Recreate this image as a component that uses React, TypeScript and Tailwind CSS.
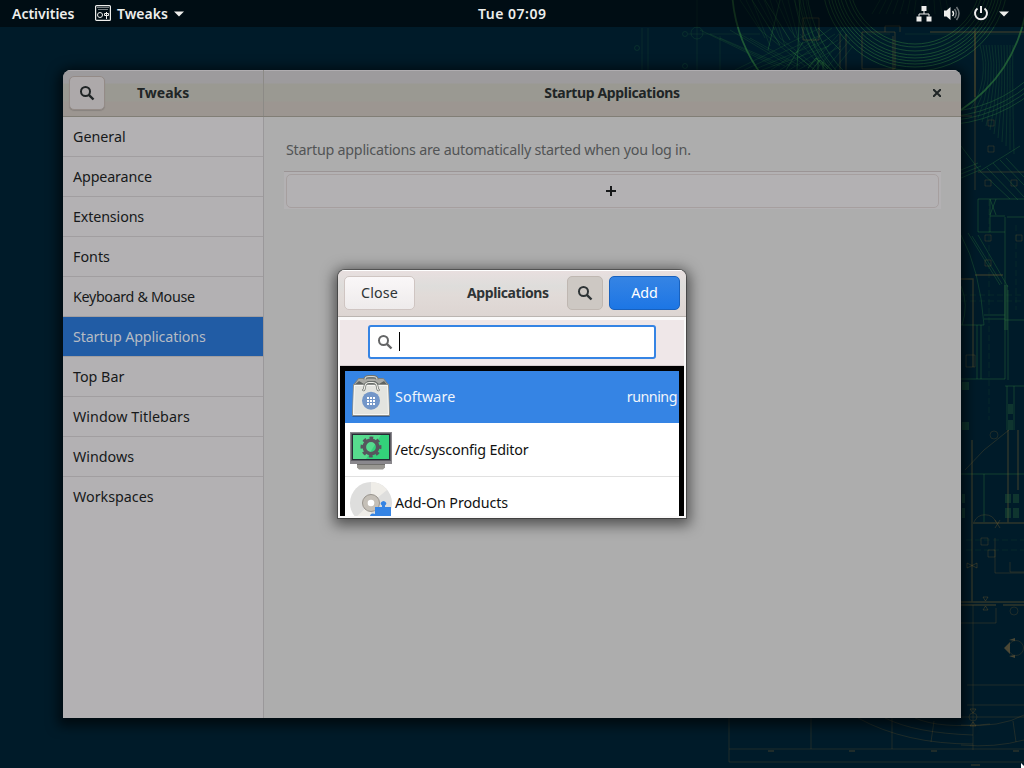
import React from "react";

const items = [
  { label: "General", tracking: "" },
  { label: "Appearance", tracking: "tracking-[-0.14px]" },
  { label: "Extensions", tracking: "tracking-[-0.14px]" },
  { label: "Fonts", tracking: "" },
  { label: "Keyboard & Mouse", tracking: "tracking-[-0.34px]" },
  { label: "Startup Applications", tracking: "tracking-[-0.15px]" },
  { label: "Top Bar", tracking: "" },
  { label: "Window Titlebars", tracking: "tracking-[0.05px]" },
  { label: "Windows", tracking: "" },
  { label: "Workspaces", tracking: "" },
];

function Search({ className }: { className: string }) {
  return (
    <svg className={className} width="16" height="16" viewBox="0 0 16 16" fill="none" stroke="currentColor">
      <circle cx="6.500" cy="6.500" r="4.500" strokeWidth="2" />
      <path d="M9.800 9.800l4.700 4.700" strokeWidth="2.400" />
    </svg>
  );
}

function Caret() {
  return <svg width="10" height="6" viewBox="0 0 10 6" fill="currentColor"><path d="M0 .5h10L5 5.500z" /></svg>;
}

const radii = [66, 69, 73, 77, 80, 83, 86, 89, 93];
const outerRadii = [134, 139, 143, 147];
const rays = [0, 1, 2, 3, 4, 5, 6, 7, 8, 9, 10, 11];

function Wallpaper() {
  return (
    <svg className="absolute inset-0" width="1024" height="768" viewBox="0 0 1024 768" fill="none">
      <g stroke="#2e7a3c" strokeOpacity=".42" strokeWidth=".8">
        {radii.map((r) => <circle key={r} cx="915" cy="-22" r={r} strokeOpacity=".62" />)}
        {outerRadii.map((r) => <circle key={r} cx="940" cy="-22" r={r} strokeOpacity=".5" />)}
        <circle cx="880" cy="-14" r="148" strokeWidth="1.800" strokeOpacity=".65" />
        <g strokeOpacity=".28">
          {rays.map((i) => <path key={i} d={`M${700 + i * 10} ${30 + (i % 3) * 4}L${775 + i * 5} 66M${735 + i * 9} 70L${820 + i * 3} ${28 + (i % 4) * 6}`} />)}
          {rays.map((i) => <path key={i} d={`M${980 + i * 3} 45Q${990 + i * 2} 80 ${970 + i * 4} ${110 + i * 4}`} />)}
          {rays.map((i) => <path key={i} d={`M${740 + i * 6} 0L${760 + i * 5} ${30 + (i % 3) * 8}M${880 + i * 6} 0L${872 + i * 7} 14`} />)}
        </g>
        <path d="M752 0L780 45M765 0L790 40M780 0L768 50M800 0L797 70M790 50L815 70M803 42L786 70M840 50L818 28" strokeOpacity=".5" />
        <path d="M688 34H760M697 0V70M642 28V70M648 28V70M720 36V70M866 34H890M905 34H1024" strokeOpacity=".22" />
        <g strokeOpacity=".25"><circle cx="685" cy="34" r="2.500" /><circle cx="697" cy="33" r="6" /><circle cx="685" cy="66" r="2.500" /><circle cx="637" cy="48" r="2.500" /></g>
        <path d="M808 68L816 58L828 69M812 70L820 60L832 70M818 60V70M823 62V70" strokeOpacity=".7" />
        <path d="M961 146L980 171L1020 146M980 171L1010 199M987 168L1018 200M993 163L1024 197M1000 160L1024 185M961 235Q980 270 984 325M961 286Q969 305 962 325M968 233L1000 285M978 235L1008 287M972 236L1002 284M1006 158L1024 177M961 170L978 163M961 174L981 166M961 178L980 170" />
        <path d="M961 325H984M961 379H1005V217M1008 290V380M978 199H1024M978 199V232H1005M990 199V232M990 199l6 16M996 199l-6 16M990 216H1005M1005 320H1024M961 474H1024M984 474V522M1007 386V430M1014 386V430M1005 386H1024M984 315H1005M984 319H1005M977 325V379M981 325V379M1007 217H1024" strokeOpacity=".5" />
        <path d="M989 200V420M1016 225V310M961 295H1024M961 301H1024M966 540H1024M966 550H1024" strokeOpacity=".2" strokeDasharray="6 3" />
      </g>
      <g stroke="#8b6b2e" strokeOpacity=".34">
        <path d="M803 18H819V40H803zM862 32H895V69H862zM893 36V70M885 32V26H900V32M840 34V70M846 34V70M975 28V190M961 116H972M978 172H1024" />
        <path d="M930 32H1024M975 32V97M975 275H1003M961 279H973V367M972 440V602M973 523H1024M1008 430V523M1018 430V490M961 602H1024M961 605H996M1003 605H1024" strokeWidth="1.400" />
        <path d="M967 685H1024M967 705H1024M973 605V750M961 717H1024M961 745Q995 748 1024 740M961 725Q1000 728 1024 715M729 718V762H1024M729 749H1024M811 718V749M892 718V749M858 718Q905 744 973 744M885 718Q915 733 973 735M915 718Q940 729 990 724M934 721L931 742M1013 721L1016 742" strokeOpacity=".22" />
        <path d="M988 120h6v6h-6zM988 146h6v6h-6zM985 180h6v6h-6zM1011 180h6v6h-6zM985 235h6v6h-6zM1016 235h6v6h-6zM981 538h7v7h-7zM988 550h7v7h-7zM985 260h6v6h-6zM966 355h9v12h-9zM995 538v35h29M961 623h35v-15M1010 562v10h14M1009 430L984 450L965 470" strokeOpacity=".25" />
        <path d="M970 709l3 4l3-4zM970 726l3-4l3 4zM983 597l2.500 4l2.500-4zM983 610l2.500-4l2.500 4zM967 563l5 2.500l5-2.500v5l-5-2.500l-5 2.500zM995 520l5 8M1000 520l-5 8" strokeOpacity=".3" />
        <path d="M974 522a12 12 0 0 1 22 0" strokeOpacity=".25" />
        <g strokeOpacity=".22"><circle cx="973" cy="717" r="4" /><circle cx="1014" cy="611" r="4" /><circle cx="994" cy="435" r="4" /><circle cx="1016" cy="648" r="7.500" /><path d="M768 751h6M849 751h6M931 751h6M1013 751h6M971 765h9" strokeWidth="2" /></g>
      </g>
      <path d="M1004 648l6-6v12zM1009 640l6-2v3zM1009 656l6 2v-3z" fill="#5d5338" fillOpacity=".8" />
      <g fill="#28603a" fillOpacity=".38"><path d="M962 382h7v8h-7zM962 422h7v8h-7zM1008 404h5v10h-5zM1008 420h5v10h-5zM1005 494h6v9h-6zM1013 494h6v9h-6zM1005 508h6v10h-6zM1013 508h6v10h-6zM1004 285h4v45h-4zM962 494h3v9h-3zM962 508h3v10h-3z" /></g>
    </svg>
  );
}

function Bag() {
  return (
    <svg width="42" height="46" viewBox="0 0 42 46" fill="none">
      <path d="M2.500 42H39.500" stroke="#2a5da0" strokeWidth="2" />
      <path d="M3.500 11L8.500 4.500H33.500L38.500 11V13H3.500z" fill="#a9aaa5" stroke="#7a7f7f" />
      <path d="M5 10.500L9 7l5 3l4-3h7l4 3l5-3l3 3.500z" fill="#5f6361" />
      <path d="M3.500 10.500H38.500L39.500 41.500H2.500z" fill="#e3e4df" stroke="#8a8d8a" />
      <path d="M4.500 11.500H37.500L38.500 40.500H3.500z" stroke="#f6f6f3" />
      <path d="M15 5.500q0-3 4-3h4q4 0 4 3" stroke="#707570" strokeWidth="3" />
      <path d="M15 5.500q0-3 4-3h4q4 0 4 3" stroke="#d8d8d2" strokeWidth="1.200" />
      <path d="M14.500 14q0 1.500-1 2M27.500 14q0 1.500 1 2M14.500 14q.5-5.500 4.500-5.500h4q4 0 4.500 5.500" stroke="#6f7470" strokeWidth="2.600" strokeLinecap="round" />
      <path d="M14.500 14q0 1.500-1 2M27.500 14q0 1.500 1 2M14.500 14q.5-5.500 4.500-5.500h4q4 0 4.500 5.500" stroke="#eeeee9" strokeWidth="1.200" strokeLinecap="round" />
      <circle cx="21" cy="26.700" r="9" fill="#7396c8" />
      <path d="M17 23h2v2h-2zm3 0h2v2h-2zm3 0h2v2h-2zm-6 3h2v2h-2zm3 0h2v2h-2zm3 0h2v2h-2zm-6 3h2v2h-2zm3 0h2v2h-2zm3 0h2v2h-2z" fill="white" />
    </svg>
  );
}

function Monitor() {
  return (
    <svg className="mt-[3px]" width="42" height="38" viewBox="0 0 42 38">
      <path d="M7 30H35V35.500L33 37.500H9L7 35.500z" fill="#999792" /><path d="M7 30H35V33H7z" fill="#706f6c" />
      <path d="M0 0H42V32H0z" fill="#8a888d" /><path d="M1 1H41V29H1z" fill="#5e5d64" /><path d="M2 2H40V28H2z" fill="#252b34" />
      <path d="M3 3H39V27H3z" fill="#57db8e" /><path d="M31 3H39V27H16z" fill="#33d17a" />
      <g transform="translate(21 15)" fill="none" stroke="#57565e">
        <circle r="6.700" strokeWidth="3.600" /><circle r="9" strokeWidth="3" strokeDasharray="3.600 3.4686" transform="rotate(-11)" />
      </g>
    </svg>
  );
}

function Disc() {
  return (
    <svg width="42" height="42" viewBox="0 0 42 42">
      <circle cx="21" cy="21" r="21" fill="#dededd" /><path d="M21 21V0Q31 0 37 8zM21 21L5 36Q11 42 21 42z" fill="#efede8" />
      <circle cx="21" cy="21" r="8.500" fill="#c5c0b8" stroke="#99948d" /><circle cx="21" cy="21" r="3.300" fill="white" />
      <path d="M25 25h7v-1.500q-2-1.500-1-3t2.500-1.500t2.500 1.500t-1 3V25h6v17H25v-6q-4 1-5-1.500q0-3 3-3l2 .5z" fill="#3584e4" />
    </svg>
  );
}

export default function App() {
  return (
    <main className="relative h-[768px] w-[1024px] overflow-hidden bg-[#001b29] font-['Noto_Sans',sans-serif] text-[14.300px] text-[#17191a]">
      <Wallpaper />
      <header className="relative flex h-[27px] items-center bg-black/50 px-3 font-semibold text-[#eeeeec]">
        <span className="w-[83px] text-[14px]">Activities</span>
        <svg className="mb-px" width="16" height="16" viewBox="0 0 16 16" fill="none" stroke="currentColor"><rect x=".6" y=".6" width="14.800" height="14.800" rx="1" strokeWidth="1.200" /><path d="M2.500 2.500h11M3.500 4.500h10" strokeDasharray="1 1" /><circle cx="5" cy="10" r="2.500" /><path d="M11.500 7v7M9.500 8.500h4v2h-4z" /></svg>
        <span className="ml-1.5 mr-1.5 text-[14px]">Tweaks</span><Caret />
        <span className="absolute left-[478px] text-[14px] tracking-[0.5px]">Tue 07:09</span>
        <div className="ml-auto mr-[3px] flex items-center">
          <svg width="16" height="16" viewBox="0 0 16 16"><path d="M5.500 0h5v5h-5zM.5 10.500h5v5h-5zM10.500 10.500h5v5h-5z" fill="currentColor" /><path d="M8 5v3M3 10.500V8h10v2.500" fill="none" stroke="currentColor" /></svg>
          <svg className="ml-[12px]" width="16" height="16" viewBox="0 0 16 16"><path d="M0 4.500h2.500L6.500 1v13l-4-3.500H0z" fill="currentColor" /><path d="M8.500 5q2 2.500 0 5" fill="none" stroke="currentColor" strokeWidth="1.500" /><path d="M10.500 3q3.500 4.500 0 9M12.500 1q5 6.500 0 13" fill="none" stroke="#70777a" strokeWidth="1.500" /></svg>
          <svg className="ml-[13px]" width="16" height="16" viewBox="0 0 16 16" fill="none" stroke="currentColor" strokeWidth="2"><path d="M8 0v7M4.500 2.500a6 6 0 1 0 7 0" /></svg>
          <span className="ml-[10px] flex"><Caret /></span>
        </div>
      </header>

      <section className="absolute left-[63px] top-[70px] flex h-[648px] w-[898px] flex-col overflow-hidden rounded-t-lg bg-[#adadad] shadow-[0_3px_12px_5px_#0009]">
        <div className="flex h-[47px] shrink-0 border-b border-[#817e76] bg-[linear-gradient(#9d9b9d_0_13px,#9a9992_14px_31px,#9c9691_32px)] text-[14px] font-bold tracking-[-0.36px] text-[#202526] shadow-[inset_0_1px_#b0adb0]">
          <div className="flex w-[201px] items-center border-r border-[#8c8a86] pl-1.5">
            <div className="grid h-[34px] w-[36px] place-items-center rounded-[5px] border border-[#948b87] bg-[#ada9aa] shadow-[0_1px_1px_#0002]"><Search className="" /></div>
            <span className="ml-[32px] pb-[2px] tracking-normal">Tweaks</span>
          </div>
          <div className="relative flex grow items-center justify-center"><span className="pb-[2px] pr-px">Startup Applications</span><svg className="absolute right-5 top-[19px]" width="8" height="8" viewBox="0 0 8 8" stroke="currentColor" strokeWidth="2"><path d="M0 0l8 8M8 0L0 8" /></svg></div>
        </div>
        <div className="flex grow">
          <nav className="w-[201px] border-r border-[#9a989a] bg-[#b3b1b3]">
            {items.map(({ label, tracking }) => (
              <div key={label} className={label === "Startup Applications" ? "flex h-10 items-center border-b border-[#a19ea0] bg-[#215ca5] pl-2.5 text-[#b5bbc4]" : "flex h-10 items-center border-b border-[#a19ea0] pl-2.5"}>
                <span className={tracking}>{label}</span>
              </div>
            )).map((row, i, rows) => (i === rows.length - 1 ? <div key="last" className="h-[39px] overflow-hidden">{row}</div> : row))}
          </nav>
          <div className="grow px-5 pt-[22px]">
            <p className="flex h-[22px] items-center pl-[2px] tracking-[-0.24px] text-[#525455]">Startup applications are automatically started when you log in.</p>
            <div className="mt-[10px] h-[38px] border-t border-[#9b9495] bg-[#b3b1b3] p-0.5"><div className="grid h-[34px] place-items-center rounded-[5px] border border-[#a69f9f] pr-[3px]"><svg width="10" height="10" viewBox="0 0 10 10" stroke="currentColor" strokeWidth="2"><path d="M5 0v10M0 5h10" /></svg></div></div>
          </div>
        </div>
      </section>

      <section className="absolute left-[338px] top-[270px] flex h-[248px] w-[348px] flex-col overflow-hidden rounded-t-[7px] bg-[#faf9f9] text-[#2e3436] shadow-[0_3px_14px_4px_#0008,0_0_0_1px_#0005]">
        <div className="flex h-[47px] shrink-0 items-center border-b border-[#bbb5b1] bg-[linear-gradient(#e9dfdf,#dedddb_16px,#e1dbd8_25px,#ddd5d2)] px-1.5 shadow-[inset_0_1px_#fff]">
          <div className="grid h-[34px] w-[71px] place-items-center rounded-[5px] border border-[#cfc5c2] bg-gradient-to-b from-[#faf7f8] to-[#eeebeb] tracking-[0.1px]">Close</div>
          <span className="ml-[52px] w-[100px] pb-[2px] text-[14px] font-bold tracking-[-0.4px]">Applications</span>
          <div className="grid h-[34px] w-[36px] place-items-center rounded-[5px] border border-[#bfb7b1] bg-[#cdc8c3]"><Search className="" /></div>
          <div className="ml-1.5 grid h-[34px] w-[71px] place-items-center rounded-[5px] border border-[#1861be] bg-gradient-to-b from-[#3584e4] to-[#1c76e5] text-white">Add</div>
        </div>
        <div className="mx-0.5 mt-[3px] h-[46px] shrink-0 border-b border-[#d5cdce] bg-[#efe7e8] px-7 pt-[5px]"><div className="flex h-[34px] items-center rounded-[3px] border-2 border-[#3584e4] bg-white px-[7px]"><Search className="text-[#656667]" /><span className="mb-px ml-1.5 h-[19px] w-px bg-black" /></div></div>
        <div className="mx-0.5 mb-0.5 h-[150px] overflow-hidden border-x-[5px] border-t-[5px] border-black bg-white text-[#111]">
          <div className="flex h-[52px] items-center bg-[#3584e4] pl-[5px] pr-0.5 text-[#f0f5fb]"><Bag /><span className="ml-[3px] grow tracking-[0.1px]">Software</span><span className="tracking-[-0.5px]">running</span></div>
          <div className="flex h-[54px] items-center border-b border-[#e1e1e1] pl-[5px]"><Monitor /><span className="ml-[3px] tracking-[-0.18px]">/etc/sysconfig Editor</span></div>
          <div className="flex h-[52px] items-center pl-[5px]"><Disc /><span className="ml-[3px] tracking-[-0.1px]">Add-On Products</span></div>
        </div>
      </section>
      <svg className="absolute bottom-0 right-0" width="3" height="5" viewBox="0 0 3 5"><path d="M0 0l3 3v2H0z" fill="white" /></svg>
    </main>
  );
}
